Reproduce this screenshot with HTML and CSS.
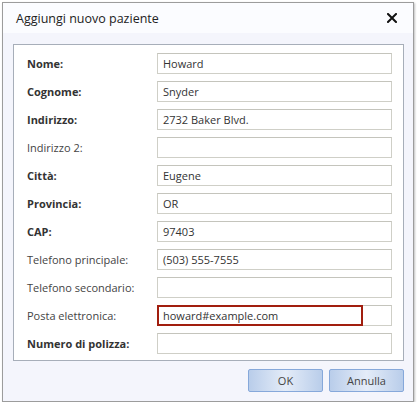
FILE: index.html
```html
<!DOCTYPE html>
<html lang="it">
<head>
<meta charset="utf-8">
<title>Aggiungi nuovo paziente</title>
<link rel="stylesheet" href="styles.css">
</head>
<body>
<div class="dialog">
  <div class="titlebar">
    <span class="title">Aggiungi nuovo paziente</span>
    <span class="close" aria-label="Chiudi">
      <svg width="10" height="10" viewBox="0 0 10 10"><path d="M1 1 L9 9 M9 1 L1 9" stroke="#111" stroke-width="2" stroke-linecap="square" fill="none"/></svg>
    </span>
  </div>
  <div class="content">
    <div class="panel">
      <div class="row"><span class="label bold">Nome:</span><div class="field">Howard</div></div>
      <div class="row"><span class="label bold">Cognome:</span><div class="field">Snyder</div></div>
      <div class="row"><span class="label bold">Indirizzo:</span><div class="field">2732 Baker Blvd.</div></div>
      <div class="row"><span class="label">Indirizzo 2:</span><div class="field"></div></div>
      <div class="row"><span class="label bold">Città:</span><div class="field">Eugene</div></div>
      <div class="row"><span class="label bold">Provincia:</span><div class="field">OR</div></div>
      <div class="row"><span class="label bold">CAP:</span><div class="field">97403</div></div>
      <div class="row"><span class="label">Telefono principale:</span><div class="field">(503) 555-7555</div></div>
      <div class="row"><span class="label">Telefono secondario:</span><div class="field"></div></div>
      <div class="row"><span class="label">Posta elettronica:</span><div class="field invalid-wrap"><div class="invalid">howard#example.com</div></div></div>
      <div class="row"><span class="label bold">Numero di polizza:</span><div class="field"></div></div>
    </div>
    <div class="buttons">
      <button class="btn">OK</button>
      <button class="btn">Annulla</button>
    </div>
  </div>
</div>
</body>
</html>
```

FILE: styles.css
```css
html, body {
  margin: 0;
  padding: 0;
  background: #ffffff;
}
body {
  font-family: "Open Sans", "Noto Sans", sans-serif;
  font-size: 11px;
  color: #333;
}
.dialog {
  margin: 2px 0 0 2px;
  width: 412px;
  height: 400px;
  box-sizing: border-box;
  border: 1px solid #9c9c9c;
  background: #f4f5fc;
  box-shadow: 1px 1px 2px rgba(0,0,0,0.25);
  display: flex;
  flex-direction: column;
}
.titlebar {
  height: 30px;
  background: #fbfcff;
  display: flex;
  align-items: center;
  justify-content: space-between;
  padding: 0 16px 0 13px;
  flex: none;
}
.title {
  font-size: 12.5px;
  color: #222;
}
.close {
  display: flex;
  width: 10px;
  height: 10px;
}
.content {
  padding: 11px 9px 8px 10px;
  display: flex;
  flex-direction: column;
}
.panel {
  background: #ffffff;
  border: 1px solid #a7aeb9;
  padding: 8px 11px 6px 13px;
  display: flex;
  flex-direction: column;
  gap: 7px;
}
.row {
  display: flex;
  align-items: center;
  height: 21px;
}
.label {
  width: 130px;
  flex: none;
  color: #444;
}
.label.bold {
  font-weight: bold;
  color: #333;
}
.field {
  flex: 1;
  height: 21px;
  box-sizing: border-box;
  border: 1px solid #cfcfc7;
  border-top-color: #c4c4bc;
  padding: 0 5px;
  display: flex;
  align-items: center;
  color: #333;
}
.invalid-wrap {
  position: relative;
  padding: 0;
}
.invalid {
  position: absolute;
  left: -1px;
  top: -1px;
  width: 206px;
  height: 21px;
  box-sizing: border-box;
  border: 2px solid #a11e0e;
  padding: 0 5px 0 4px;
  display: flex;
  align-items: center;
  background: #fff;
}
.buttons {
  display: flex;
  justify-content: flex-end;
  gap: 6px;
  margin-top: 8px;
}
.btn {
  width: 75px;
  height: 23px;
  border: 1px solid #86a8da;
  border-radius: 2px;
  background: linear-gradient(to right, #b9cdea, #e4ecf8 50%, #b9cdea);
  font-family: inherit;
  font-size: 11px;
  color: #444;
  padding: 0;
}
```
